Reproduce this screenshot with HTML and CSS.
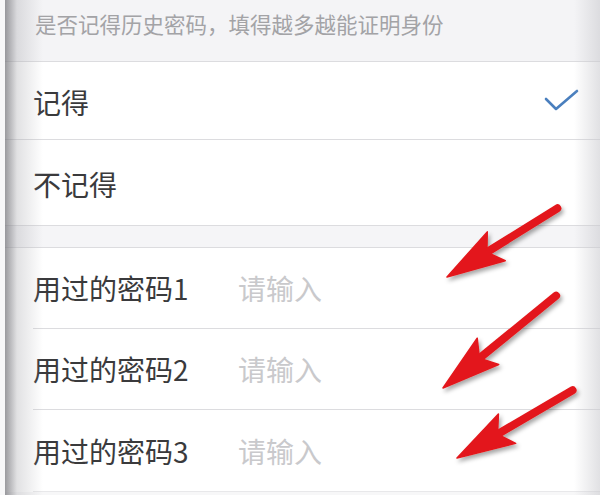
FILE: index.html
```html
<!DOCTYPE html>
<html lang="zh-CN">
<head>
    <meta charset="UTF-8">
    <meta name="viewport" content="width=device-width, initial-scale=1.0">
    <title>历史密码</title>
    <link rel="stylesheet" href="styles.css">
</head>
<body>

<div class="screen">
    <div class="page">
        <div class="hint">是否记得历史密码，填得越多越能证明身份</div>

        <div class="options">
            <div class="option option-first">
                <span class="label">记得</span>
                <svg class="check" viewBox="0 0 40 30" width="40" height="30">
                    <path d="M4 11 L14 21 L35 3" fill="none" stroke="#4a7fbe" stroke-width="2.6" stroke-linecap="round" stroke-linejoin="round"/>
                </svg>
            </div>
            <div class="option option-second">
                <span class="label">不记得</span>
            </div>
        </div>

        <div class="gap"></div>

        <div class="fields">
            <div class="field">
                <span class="label field-label">用过的密码1</span>
                <span class="placeholder">请输入</span>
            </div>
            <div class="field">
                <span class="label field-label">用过的密码2</span>
                <span class="placeholder">请输入</span>
            </div>
            <div class="field">
                <span class="label field-label">用过的密码3</span>
                <span class="placeholder">请输入</span>
            </div>
        </div>
        <div class="bottom"></div>

        <!-- red arrows drawn over the screenshot -->
        <svg class="arrows" viewBox="0 0 600 495" width="600" height="495">
            <defs>
                <filter id="shadow" x="-20%" y="-20%" width="140%" height="140%">
                    <feDropShadow dx="2" dy="3" stdDeviation="2" flood-color="#000" flood-opacity="0.35"/>
                </filter>
            </defs>
            <g filter="url(#shadow)" fill="#e3191b" stroke="#e3191b">
                <g transform="translate(447 277) rotate(-31.9)">
                    <line x1="44" y1="0" x2="130" y2="0" stroke-width="8" stroke-linecap="round"/>
                    <polygon points="0,0 58,-17 47,0 58,17" stroke-width="1.5" stroke-linejoin="round"/>
                </g>
                <g transform="translate(443 388) rotate(-39.2)">
                    <line x1="44" y1="0" x2="146" y2="0" stroke-width="8" stroke-linecap="round"/>
                    <polygon points="0,0 58,-17 47,0 58,17" stroke-width="1.5" stroke-linejoin="round"/>
                </g>
                <g transform="translate(457 458) rotate(-30.4)">
                    <line x1="44" y1="0" x2="134" y2="0" stroke-width="8" stroke-linecap="round"/>
                    <polygon points="0,0 58,-17 47,0 58,17" stroke-width="1.5" stroke-linejoin="round"/>
                </g>
            </g>
        </svg>
    </div>
</div>

</body>
</html>
```

FILE: styles.css
```css
body {
    margin: 0;
    background-color: #f7f7f8;
    font-family: "Noto Sans CJK SC", "Noto Sans", sans-serif;
}
.screen {
    width: 600px;
    height: 495px;
    padding-left: 5px;
    box-sizing: border-box;
    overflow: hidden;
    background-color: #f7f7f8;
}
.page {
    position: relative;
    height: 495px;
    background-color: #fff;
}
/* soft shadow down the left and right edges */
.page::after {
    content: "";
    position: absolute;
    top: 0;
    left: 0;
    right: 0;
    bottom: 0;
    pointer-events: none;
    background:
        linear-gradient(to right, rgba(120, 120, 125, 0.75), rgba(170, 170, 175, 0.35) 12px, rgba(255, 255, 255, 0) 38px),
        linear-gradient(to left, rgba(200, 200, 205, 0.55), rgba(255, 255, 255, 0) 26px);
}
.hint {
    height: 62px;
    box-sizing: border-box;
    padding: 9px 0 0 30px;
    font-size: 21.5px;
    line-height: 30px;
    color: #a3a3a6;
    background-color: #f4f4f6;
    border-bottom: 1px solid #dcdcdf;
}
.options {
    background-color: #fff;
}
.option {
    display: flex;
    align-items: center;
    justify-content: space-between;
    padding: 2px 18px 0 28px;
    border-bottom: 1px solid #dcdcdf;
}
.option-first {
    height: 75px;
}
.option-second {
    height: 83px;
}
.label {
    font-size: 28px;
    color: #3a3a3c;
}
.check {
    margin-top: 2px;
}
.gap {
    height: 21px;
    background-color: #f5f5f7;
    border-bottom: 1px solid #dcdcdf;
}
.fields {
    background-color: #fff;
}
.field {
    display: flex;
    align-items: center;
    height: 80px;
    margin-left: 28px;
    border-bottom: 1px solid #dcdcdf;
}
.field:last-child {
    height: 81px;
    border-bottom: 1px solid #e8e8ea;
}
.field-label {
    width: 205px;
}
.placeholder {
    font-size: 28px;
    color: #c9c9cc;
}
.bottom {
    height: 10px;
    background-color: #f7f7f8;
}
.arrows {
    position: absolute;
    top: 0;
    left: -5px;
    z-index: 2;
}
```
